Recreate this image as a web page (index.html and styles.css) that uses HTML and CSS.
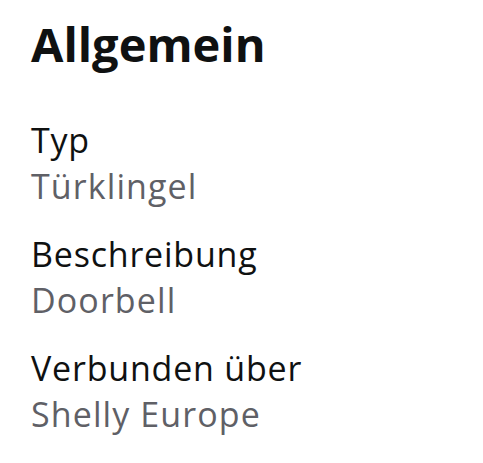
FILE: index.html
```html
<!DOCTYPE html>
<html lang="de">
<head>
  <meta charset="UTF-8">
  <title>Allgemein</title>
  <meta name="viewport" content="width=device-width, initial-scale=1">
  <link rel="stylesheet" href="styles.css">
</head>
<body>
  <section class="panel">
    <h1 class="panel-title">Allgemein</h1>

    <dl class="props">
      <div class="prop">
        <dt>Typ</dt>
        <dd>Türklingel</dd>
      </div>
      <div class="prop">
        <dt>Beschreibung</dt>
        <dd>Doorbell</dd>
      </div>
      <div class="prop">
        <dt>Verbunden über</dt>
        <dd>Shelly Europe</dd>
      </div>
    </dl>
  </section>
</body>
</html>
```

FILE: styles.css
```css
body {
  margin: 0;
  background: #fff;
  font-family: 'Open Sans', 'Noto Sans', sans-serif;
  color: #0f1111;
}
.panel {
  padding: 16px 31px 0;
}
.panel-title {
  margin: 0;
  font-size: 47px;
  line-height: 56px;
  font-weight: 700;
}
.props {
  margin: 45px 0 0;
}
.prop + .prop {
  margin-top: 22px;
}
.prop dt,
.prop dd {
  margin: 0;
  font-size: 34px;
  line-height: 46px;
  letter-spacing: 0.8px;
}
.prop dd {
  color: #5f6066;
  letter-spacing: 1.1px;
}
```
